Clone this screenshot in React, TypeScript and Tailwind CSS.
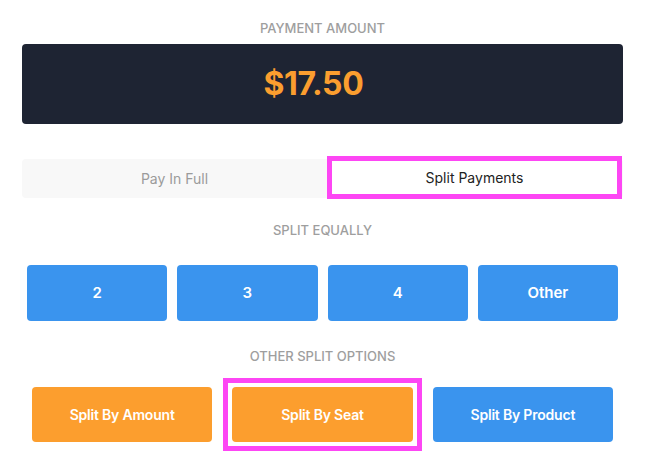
import React from 'react';

const label = 'text-center text-[13px] leading-[16px] font-medium text-[#9e9e9e] uppercase';

export default function App() {
  return (
    <div className="w-[645px] h-[465px] bg-white px-[22px] pt-[20px] font-['Inter',sans-serif]">
      <div className={label}>Payment Amount</div>

      {/* amount */}
      <div className="mt-[8px] h-[80px] rounded bg-[#1e2433] flex items-center justify-center">
        <span className="mr-[18px] text-[32px] font-bold text-[#fb9e2f] tracking-[-0.3px]">$17.50</span>
      </div>

      {/* tabs */}
      <div className="mt-[35px] flex h-[39px] rounded bg-[#f8f8f8]">
        <button className="w-[305px] h-full text-[14px] text-[#9b9b9b]">Pay In Full</button>
        <button className="w-[295px] h-[43px] -mt-[3px] border-[5px] border-[#fd46f4] bg-white text-[14px] text-[#222]">
          Split Payments
        </button>
      </div>

      <div className={`${label} mt-[24px]`}>Split Equally</div>

      {/* equal split */}
      <div className="mt-[27px] px-[5px] grid grid-cols-4 gap-[10px]">
        {['2', '3', '4', 'Other'].map((t) => (
          <button key={t} className="h-[56px] rounded bg-[#3a94ee] text-white text-[15px] font-semibold">
            {t}
          </button>
        ))}
      </div>

      <div className={`${label} mt-[27px]`}>Other Split Options</div>

      {/* other options */}
      <div className="mt-[23px] px-[10px] grid grid-cols-3 gap-[20px]">
        <button className="h-[55px] rounded bg-[#fc9e2e] text-white text-[14px] font-semibold tracking-[-0.2px]">
          Split By Amount
        </button>
        <div className="-m-[9px] border-[5px] border-[#fd46f4] p-[4px]">
          <button className="w-full h-[55px] rounded bg-[#fc9e2e] text-white text-[14px] font-semibold tracking-[-0.2px]">
            Split By Seat
          </button>
        </div>
        <button className="h-[55px] rounded bg-[#3a94ee] text-white text-[14px] font-semibold tracking-[-0.2px]">
          Split By Product
        </button>
      </div>
    </div>
  );
}
